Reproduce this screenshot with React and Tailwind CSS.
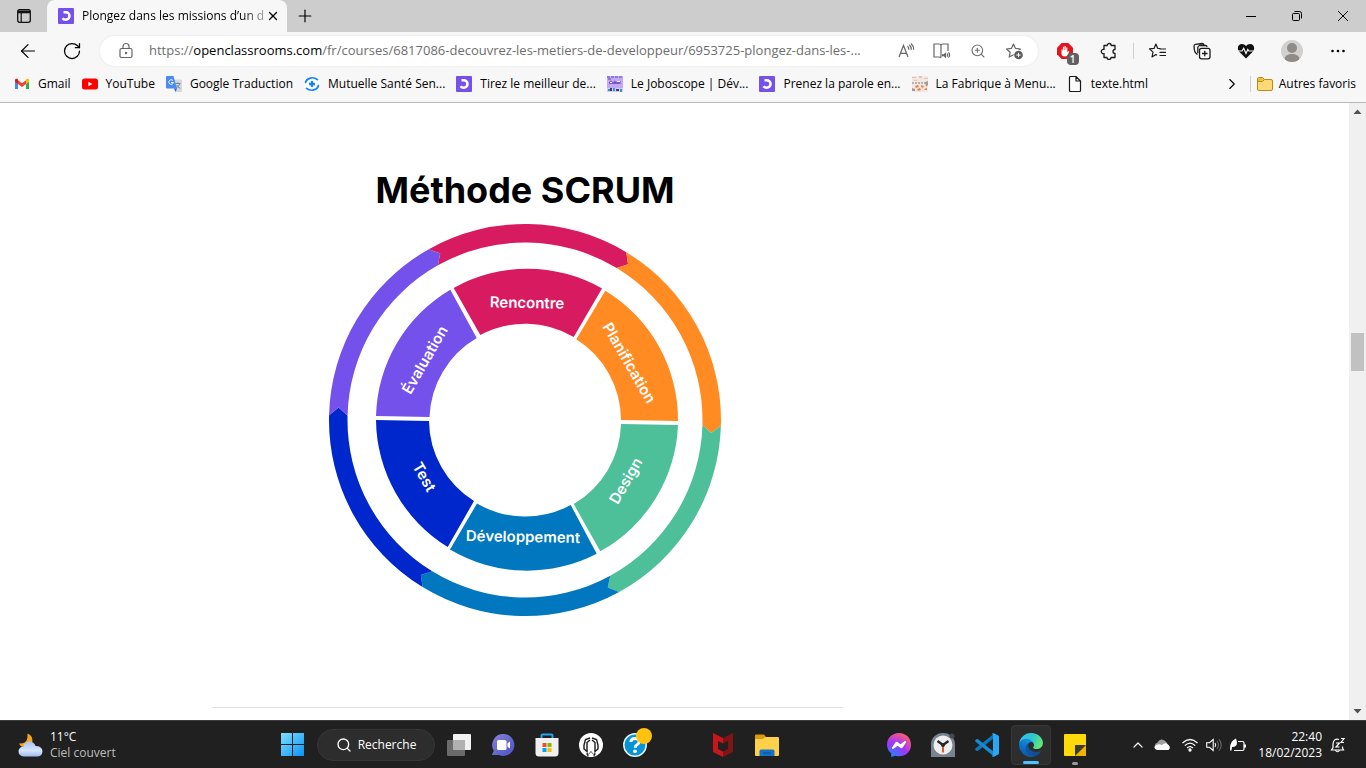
import React from "react";
import { ArrowLeft, ChevronRight, ChevronUp, Plus, RotateCw, Search, X, ZoomIn } from "lucide-react";

function OcLogo() {
  return (
    <svg viewBox="0 0 16 16" className="h-4 w-4 shrink-0" aria-hidden="true">
      <rect width="16" height="16" rx="1" fill="#7451eb" />
      <path d="M5.500 4.300h2.300a3.700 3.700 0 0 1 0 7.400q-2.200 0-3.300-1.500" fill="none" stroke="#fff" strokeWidth="2.500" />
    </svg>
  );
}

function GmailIcon() {
  return (
    <svg viewBox="0 0 16 16" className="h-4 w-4 shrink-0" aria-hidden="true">
      <path d="M1 4.500v8.500h3V7.500z" fill="#4285f4" />
      <path d="M12 7.500V13h3V4.500z" fill="#34a853" />
      <path d="M4 4.200v3.800l4 3 4-3V4.200L8 7.200z" fill="#ea4335" />
      <path d="M1 4.200C1 2.600 2.700 2.400 3.500 3.100L4 3.600V8L1 5.800z" fill="#c5221f" />
      <path d="M15 4.200c0-1.600-1.700-1.800-2.500-1.100l-.5.5V8l3-2.200z" fill="#fbbc04" />
    </svg>
  );
}

function YoutubeIcon() {
  return (
    <svg viewBox="0 0 16 16" className="h-4 w-4 shrink-0" aria-hidden="true">
      <rect y="2.500" width="16" height="11" rx="2.500" fill="#f00" />
      <path d="M6.400 5.700v4.600L10.400 8z" fill="#fff" />
    </svg>
  );
}

function TranslateIcon() {
  return (
    <svg viewBox="0 0 16 16" className="h-4 w-4 shrink-0" aria-hidden="true">
      <path d="M6 3.500h9a1 1 0 0 1 1 1V15a1 1 0 0 1-1 1H9.500z" fill="#d5d7da" />
      <path d="M9.500 7.500h5M12 6.300v1.200M13.700 7.500c-.5 2-1.700 3.500-3.500 4.500M10.700 9c.7 1.500 1.800 2.500 3.500 3.200" stroke="#7b8794" fill="none" />
      <path d="M1 0h6.500L11 12.500H1a1 1 0 0 1-1-1V1a1 1 0 0 1 1-1z" fill="#4a8af4" />
      <path d="M8 12.500h3L9.500 16z" fill="#3367d6" />
      <path d="M7 4.700a2.300 2.300 0 1 0 .4 1.800H5" stroke="#fff" fill="none" />
    </svg>
  );
}

function MutuelleIcon() {
  return (
    <svg viewBox="0 0 16 16" className="h-4 w-4 shrink-0" aria-hidden="true">
      <circle cx="8" cy="8" r="8" fill="#fff" />
      <path d="M1.500 6.500C2.500 2.200 9 0 13.500 3.600M14.500 9.500c-1 4.300-7.500 6.500-12 2.900" stroke="#1485f5" strokeWidth="1.700" fill="none" strokeLinecap="round" />
      <path d="M8 5v6M5 8h6" stroke="#1485f5" strokeWidth="2.300" />
    </svg>
  );
}

function JoboscopeIcon() {
  return (
    <svg viewBox="0 0 16 16" className="h-4 w-4 shrink-0" aria-hidden="true">
      <rect width="16" height="16" fill="#c4a7f5" />
      <path d="M0 1h16M1 3h4" stroke="#614fb0" strokeDasharray="3 1" />
      <path d="M2 6l2-1.500 2 2 1.500-2 2 1.500 4-1v3H2z" fill="#7657ce" />
      <path d="M3 6h2v1H3zM10 5h3v1h-3z" fill="#e5fff7" />
      <path d="M0 12h16v4H0z" fill="#d7c8f5" />
      <path d="M1 13h2v2H1zM6 12h2v3H6zM13 13h2v3h-2z" fill="#29a6a3" />
      <path d="M3 12h2v3H3zM9 13h3v2H9z" fill="#41348a" />
    </svg>
  );
}

function FabriqueIcon() {
  return (
    <svg viewBox="0 0 16 16" className="h-4 w-4 shrink-0" aria-hidden="true">
      <rect width="16" height="16" fill="#f1e8e3" />
      <path d="M0 1h4v1H0zM7 0h3v2H7zM12 2h4v1h-4zM2 4h3v1H2z" fill="#e6c3b2" />
      <path d="M0 7h14" stroke="#8a7d78" strokeDasharray="2 1" />
      <path d="M3 10l3-1 1 2-3 1zM9 9l3 1-1 2-2-1zM5 13l3-1 1 2-3 1zM12 13l3-1v2h-2z" fill="#e6854c" />
      <path d="M13 6l3-1v4l-2 2zM0 12l3 1v2H0z" fill="#a79b96" />
    </svg>
  );
}

function FileIcon() {
  return (
    <svg viewBox="0 0 16 16" className="h-4 w-4 shrink-0" aria-hidden="true">
      <path d="M3.500.500h5.500l4.500 4.500v9.500a1 1 0 0 1-1 1h-9a1 1 0 0 1-1-1v-13a1 1 0 0 1 1-1zM9 .500V5h4.500" fill="#fff" stroke="#1a1a1a" strokeWidth="1.200" />
    </svg>
  );
}

function FolderIcon() {
  return (
    <svg viewBox="0 0 16 16" className="h-4 w-4 shrink-0" aria-hidden="true">
      <path d="M.500 3a1.500 1.500 0 0 1 1.500-1.500h3.500l2 2H14A1.500 1.500 0 0 1 15.500 5v8a1.500 1.500 0 0 1-1.500 1.500H2A1.500 1.500 0 0 1 .500 13z" fill="#ffd977" stroke="#b98a14" />
      <path d="M1 2.800q0-.8 1-.8h3.300l1.700 1.500L5.300 5H1z" fill="#eebb3e" />
      <path d="M.500 5.500h5l2-2" stroke="#b98a14" fill="none" />
    </svg>
  );
}

const bookmarks = [
  { label: "Gmail", Icon: GmailIcon },
  { label: "YouTube", Icon: YoutubeIcon },
  { label: "Google Traduction", Icon: TranslateIcon },
  { label: "Mutuelle Santé Sen...", Icon: MutuelleIcon },
  { label: "Tirez le meilleur de...", Icon: OcLogo },
  { label: "Le Joboscope | Dév...", Icon: JoboscopeIcon },
  { label: "Prenez la parole en...", Icon: OcLogo },
  { label: "La Fabrique à Menu...", Icon: FabriqueIcon },
  { label: "texte.html", Icon: FileIcon },
];

function IconButton({ label, className = "w-11", children }) {
  return (
    <button type="button" aria-label={label} className={`flex h-8 shrink-0 items-center justify-center ${className}`}>
      {children}
    </button>
  );
}

function TabStrip() {
  return (
    <div className="flex h-8 shrink-0 bg-[#cdcdcd]">
      <IconButton label="Menu des actions d’onglet" className="w-[47px]">
        <svg viewBox="0 0 16 16" className="h-4 w-4" aria-hidden="true">
          <rect x="1.700" y="1.700" width="12.600" height="12.600" rx="2" fill="none" stroke="#111" strokeWidth="1.300" />
          <path d="M2 2.500h12v2.800H2z" fill="#111" />
          <path d="M5.200 5v9" stroke="#111" strokeWidth="1.200" />
        </svg>
      </IconButton>
      <div className="flex w-60 items-center justify-between rounded-t-lg bg-[#f7f7f7] pl-[11px] pr-1.5 text-black">
        <span className="flex items-center gap-2">
          <OcLogo />
          <span className="whitespace-nowrap text-xs [mask-image:linear-gradient(to_right,black_88%,#0005)]">
            Plongez dans les missions d’un d
          </span>
        </span>
        <IconButton label="Fermer l’onglet" className="w-4">
          <X className="h-3.5 w-3.5" strokeWidth={2.400} />
        </IconButton>
      </div>
      <IconButton label="Nouvel onglet" className="w-9">
        <Plus className="h-5 w-5" strokeWidth={1.400} />
      </IconButton>
      <div className="ml-auto flex">
        <IconButton label="Réduire" className="w-[46px]">
          <svg viewBox="0 0 12 12" className="h-3 w-3" aria-hidden="true"><path d="M1 6.500h10" stroke="#000" /></svg>
        </IconButton>
        <IconButton label="Restaurer" className="w-[46px]">
          <svg viewBox="0 0 12 12" className="h-3 w-3" fill="none" stroke="#000" aria-hidden="true">
            <rect x="1.500" y="3.500" width="7" height="7" rx="1" />
            <path d="M3.500 1.500h5a2 2 0 0 1 2 2v5" />
          </svg>
        </IconButton>
        <IconButton label="Fermer" className="w-[46px]">
          <svg viewBox="0 0 12 12" className="h-3 w-3" aria-hidden="true"><path d="M1 1l10 10M11 1L1 11" stroke="#000" /></svg>
        </IconButton>
      </div>
    </div>
  );
}

function AddressBar() {
  return (
    <div className="flex h-[30px] min-w-0 flex-1 items-center rounded-full bg-white pl-[18px] pr-1.5 text-[#6e6e6e] shadow-[0_0_3px_rgba(0,0,0,0.08)]">
      <svg viewBox="0 0 16 18" className="h-[18px] w-4 shrink-0" fill="none" stroke="#666" strokeWidth="1.200" aria-hidden="true">
        <rect x="2" y="6.500" width="12" height="9" rx="1.500" />
        <path d="M5 6.500V4.500a3 3 0 0 1 6 0v2" />
        <circle cx="8" cy="11" r=".6" fill="#666" />
      </svg>
      <div className="ml-[15px] min-w-0 flex-1 overflow-hidden whitespace-nowrap text-[13px]">
        https://<span className="text-black">openclassrooms.com</span>/fr/courses/6817086-decouvrez-les-metiers-de-developpeur/6953725-plongez-dans-les-...
      </div>
      <IconButton label="Lecture à voix haute" className="w-9">
        <svg viewBox="0 0 18 18" className="h-[18px] w-[18px]" fill="none" stroke="#666" strokeWidth="1.200" aria-hidden="true">
          <path d="M2 15L6.500 3.500 11 15M3.500 11.300h6" />
          <path d="M10.500 4.300q1.400 1.300 1.400 3.400M12.300 2.800q2 1.800 2 4.900M14.100 1.500q2.600 2.500 2.600 6.200" />
        </svg>
      </IconButton>
      <IconButton label="Lecteur immersif" className="w-9">
        <svg viewBox="0 0 18 18" className="h-[18px] w-[18px]" fill="none" stroke="#666" strokeWidth="1.200" aria-hidden="true">
          <path d="M8 3v12M8 3.500q0-1.500-2-1.500H1v13h5q2 0 2 1M8 3.500q0-1.500 2-1.500h5v7" />
          <path d="M9 12.300h1.700l2.300-2v6l-2.300-2H9z" fill="#666" stroke="none" />
          <path d="M14 11.500q1.300 1.500 0 3M15.500 10.300q2.300 2.700 0 5.400" />
        </svg>
      </IconButton>
      <IconButton label="Zoom" className="w-9"><ZoomIn className="h-4 w-4" strokeWidth={1.600} /></IconButton>
      <IconButton label="Ajouter aux favoris" className="w-9">
        <svg viewBox="0 0 18 18" className="h-[18px] w-[18px]" aria-hidden="true">
          <path d="M8.500 2l2 4.400 4.900.6-3.600 3.300.9 4.800-4.200-2.400-4.300 2.400.9-4.800L1.500 7l4.900-.6z" fill="none" stroke="#666" strokeWidth="1.200" strokeLinejoin="round" />
          <circle cx="13.500" cy="13" r="5" fill="#fff" />
          <circle cx="13.500" cy="13" r="4.300" fill="#5c5c5c" />
          <path d="M13.500 10.800v4.400M11.300 13h4.400" stroke="#fff" />
        </svg>
      </IconButton>
    </div>
  );
}

function Toolbar() {
  return (
    <div className="flex h-[38px] shrink-0 items-center px-1.5">
      <IconButton label="Retour"><ArrowLeft className="h-[22px] w-[22px]" strokeWidth={1.300} /></IconButton>
      <IconButton label="Actualiser" className="mr-1.5 w-11"><RotateCw className="h-5 w-5" strokeWidth={1.500} /></IconButton>
      <AddressBar />
      <IconButton label="Bloqueur de publicités" className="ml-1 w-[45px]">
        <span className="relative">
          <svg viewBox="0 0 16 16" className="h-4 w-4" aria-hidden="true">
            <path d="M4.700 0h6.600L16 4.700v6.600L11.300 16H4.700L0 11.300V4.700z" fill="#e3141b" />
            <path d="M4.500 6.500v4q0 3 3.500 3 2.500 0 3.300-2.500l1-3-1.200.2-.8 1V4.500H9.200V7h-.4V3H7.500v4h-.4V3.700H5.900V8h-.3V6.500z" fill="#fff" />
          </svg>
          <span className="absolute -bottom-1.5 left-2.5 h-3 w-3 rounded-sm bg-[#616161] text-center text-[10px] font-semibold leading-3 text-white">1</span>
        </span>
      </IconButton>
      <IconButton label="Extensions">
        <svg viewBox="0 0 18 18" className="h-[18px] w-[18px]" fill="none" stroke="#1a1a1a" strokeWidth="1.300" strokeLinejoin="round" aria-hidden="true">
          <path d="M4 3.500h3.200a2 2 0 0 1 4 0H15v4a1.900 1.900 0 1 0 0 4v4h-4a2 2 0 0 1-4 0H4v-4a2.100 2.100 0 1 1 0-4z" />
        </svg>
      </IconButton>
      <span className="mx-0.5 h-4 w-px bg-[#cfcfcf]" />
      <IconButton label="Favoris">
        <svg viewBox="0 0 18 18" className="h-[18px] w-[18px]" fill="none" stroke="#1a1a1a" strokeWidth="1.200" strokeLinejoin="round" aria-hidden="true">
          <path d="M11.500 6.500l-2.700-.1L6.900 2 5.100 6.400l-4.600.5 3.500 3.200L3 15l3.900-2.500L8 13.200M10.500 7h6.500M10.500 10.300h6.500M10.500 13.500h6.500" />
        </svg>
      </IconButton>
      <IconButton label="Collections">
        <svg viewBox="0 0 18 18" className="h-[18px] w-[18px]" fill="none" stroke="#1a1a1a" strokeWidth="1.300" aria-hidden="true">
          <path d="M4.500 12.500L2.800 11Q1.500 9.500 1.300 7.500L1 4Q1 2.500 2.500 2.300L9 1.500q1.500 0 2 1.300M4.800 11V5.500Q5 4 6.500 3.500h6q1.300 0 1.700 1.300" />
          <rect x="6.500" y="6.300" width="10.500" height="10.500" rx="2" />
          <path d="M11.750 8.800v5.500M9 11.500h5.500" />
        </svg>
      </IconButton>
      <IconButton label="Performances">
        <svg viewBox="0 0 18 16" className="h-4 w-[18px]" aria-hidden="true">
          <path d="M9 15.500L2.200 8.800C-.5 5.500 1 1 5 1q2.500 0 4 2 1.500-2 4-2c4 0 5.500 4.500 2.800 7.800z" fill="#111" />
          <path d="M0 8h5l1.700-2.800L9 10.500l1.800-4L12 8h6" fill="none" stroke="#f7f7f7" strokeWidth="1.200" />
        </svg>
      </IconButton>
      <IconButton label="Profil" className="w-12">
        <svg viewBox="0 0 22 22" className="h-[22px] w-[22px]" aria-hidden="true">
          <defs><clipPath id="avatar-clip"><circle cx="11" cy="11" r="11" /></clipPath></defs>
          <circle cx="11" cy="11" r="11" fill="#d2d0ce" />
          <g fill="#8f8b88" clipPath="url(#avatar-clip)"><circle cx="11" cy="8" r="5" /><ellipse cx="11" cy="19" rx="7.500" ry="5" /></g>
        </svg>
      </IconButton>
      <IconButton label="Paramètres et plus">
        <svg viewBox="0 0 16 16" className="h-4 w-4" aria-hidden="true"><circle cx="2.500" cy="8" r="1.300" /><circle cx="8" cy="8" r="1.300" /><circle cx="13.500" cy="8" r="1.300" /></svg>
      </IconButton>
    </div>
  );
}

function BookmarksBar() {
  return (
    <nav aria-label="Favoris" className="flex h-[33px] shrink-0 items-center gap-[11px] border-b border-[#b9b9b9] pb-1 pl-3.5 pr-2.5 text-xs text-black">
      {bookmarks.map(({ label, Icon }) => (
        <a key={label} href="#" className="flex shrink-0 items-center gap-2 whitespace-nowrap">
          <Icon />
          {label}
        </a>
      ))}
      <div className="ml-auto flex items-center">
        <IconButton label="Plus de favoris" className="w-6"><ChevronRight className="h-[18px] w-[18px]" strokeWidth={1.500} /></IconButton>
        <span className="mx-1.5 h-4 w-px bg-[#cfcfcf]" />
        <button type="button" className="flex items-center gap-1.5 whitespace-nowrap"><FolderIcon />Autres favoris</button>
      </div>
    </nav>
  );
}

const RING = { cx: 525, cy: 420, outer: 196, inner: 177.5 };
const ringSegments = [
  { color: "#d81b60", from: -29.4, to: 31.1 },
  { color: "#ff8b22", from: 31.1, to: 91.6 },
  { color: "#4dbf99", from: 91.6, to: 151.3 },
  { color: "#0077be", from: 151.3, to: 211.5 },
  { color: "#0027cc", from: 211.5, to: 271.4 },
  { color: "#7451eb", from: 271.4, to: 330.6 },
];
const wedges = [
  { color: "#d81b60", d: "M453.700 288A151 151 0 0 1 602 288.500L573.700 337A95.500 95.500 0 0 0 480.300 335Z" },
  { color: "#ff8b22", d: "M605.300 290.700A151 151 0 0 1 678 421L621 420A95.500 95.500 0 0 0 576.300 339.300Z" },
  { color: "#4dbf99", d: "M678 425A151 151 0 0 1 600.300 551.300L573.700 504A95.500 95.500 0 0 0 621 424Z" },
  { color: "#0077be", d: "M596.700 553.700A151 151 0 0 1 450 549.500L477 503.500A95.500 95.500 0 0 0 570.700 505Z" },
  { color: "#0027cc", d: "M447.700 547A151 151 0 0 1 376 420L429 421A95.500 95.500 0 0 0 474 501Z" },
  { color: "#7451eb", d: "M376 416A151 151 0 0 1 450.300 289.700L476.700 338A95.500 95.500 0 0 0 429.500 417Z" },
];
const wedgeLabels = [
  { text: "Rencontre", x: 527, y: 303, turn: 1 },
  { text: "Planification", x: 629, y: 363, turn: 60 },
  { text: "Design", x: 626, y: 481, turn: -60 },
  { text: "Développement", x: 523, y: 537, turn: 1 },
  { text: "Test", x: 424, y: 477, turn: 60 },
  { text: "Évaluation", x: 425, y: 360, turn: -60 },
];

function ringPoint(radius, degrees) {
  const a = (degrees * Math.PI) / 180;
  return `${(RING.cx + radius * Math.sin(a)).toFixed(2)} ${(RING.cy - radius * Math.cos(a)).toFixed(2)}`;
}

function arrowPath(from, to) {
  const { outer, inner } = RING;
  const middle = (outer + inner) / 2;
  return `M${ringPoint(outer, from)}A${outer} ${outer} 0 0 1 ${ringPoint(outer, to)}L${ringPoint(middle, to + 2.4)}L${ringPoint(inner, to)}A${inner} ${inner} 0 0 0 ${ringPoint(inner, from)}L${ringPoint(middle, from + 2.4)}Z`;
}

function ScrumDiagram() {
  return (
    <svg viewBox="328 223 394 394" className="h-[394px] w-[394px]" role="img" aria-label="Cycle de la méthode SCRUM">
      {ringSegments.map((s) => <path key={s.color} d={arrowPath(s.from, s.to)} fill={s.color} />)}
      {wedges.map((w) => <path key={w.color} d={w.d} fill={w.color} />)}
      <g fill="#fff" fontSize="15" fontWeight="600" textAnchor="middle" className="font-[Inter,sans-serif]">
        {wedgeLabels.map((l) => (
          <text key={l.text} transform={`translate(${l.x} ${l.y}) rotate(${l.turn})`} dy="5">{l.text}</text>
        ))}
      </g>
    </svg>
  );
}

function Scrollbar() {
  return (
    <div className="flex w-[17px] shrink-0 flex-col items-center bg-[#f0f0f0]" aria-hidden="true">
      <svg viewBox="0 0 17 17" className="h-[17px] w-[17px]"><path d="M4.500 11h8l-4-4.500z" fill="#505050" /></svg>
      <div className="flex-[213]" />
      <div className="h-[38px] w-[13px] bg-[#c1c1c1]" />
      <div className="flex-[332]" />
      <svg viewBox="0 0 17 17" className="h-[17px] w-[17px]"><path d="M4.500 6h8l-4 4.500z" fill="#505050" /></svg>
    </div>
  );
}

function WindowsIcon() {
  return (
    <svg viewBox="0 0 24 24" className="h-6 w-6" aria-hidden="true">
      <defs><linearGradient id="win" x1="0" y1="0" x2="1" y2="1"><stop stopColor="#7fe0ff" /><stop offset="1" stopColor="#0a93f5" /></linearGradient></defs>
      <path d="M0 0h11v11H0zM12 0h11v11H12zM0 12h11v11H0zM12 12h11v11H12z" fill="url(#win)" />
    </svg>
  );
}

function TaskViewIcon() {
  return (
    <svg viewBox="0 0 24 24" className="h-6 w-6" aria-hidden="true">
      <rect x="6" y="1" width="18" height="16" rx="1" fill="#f1f1f1" />
      <rect x="0" y="7" width="18" height="16" rx="1" fill="#6b6b6b" />
      <path d="M6 7h12v10H6z" fill="#b0b0b0" />
    </svg>
  );
}

function ChatIcon() {
  return (
    <svg viewBox="0 0 24 24" className="h-6 w-6" aria-hidden="true">
      <defs><linearGradient id="chat" x1="0" y1="0" x2="1" y2="1"><stop stopColor="#9a7fe0" /><stop offset=".4" stopColor="#6a70cc" /><stop offset="1" stopColor="#5050c8" /></linearGradient></defs>
      <path d="M12.500 1a11 11 0 1 1-4.700 21H1.500q-1-.4 0-1.500l1.300-2.800A11 11 0 0 1 12.500 1z" fill="url(#chat)" />
      <rect x="6" y="7" width="9.500" height="10" rx="1.500" fill="#fff" />
      <path d="M16.500 10.300L19 8.500v7l-2.500-1.800z" fill="#fff" />
    </svg>
  );
}

function StoreIcon() {
  return (
    <svg viewBox="0 0 24 24" className="h-6 w-6" aria-hidden="true">
      <path d="M6.500 7V2.500a1 1 0 0 1 1-1h9a1 1 0 0 1 1 1V7" fill="none" stroke="#22a7ee" strokeWidth="2" />
      <path d="M.500 5h23V20a3.500 3.500 0 0 1-3.500 3.500H4A3.500 3.500 0 0 1 .500 20z" fill="#f0f0f0" />
      <path d="M7.500 10h4v4h-4z" fill="#f25022" /><path d="M12.500 10h4v4h-4z" fill="#7fba00" />
      <path d="M7.500 15h4v4h-4z" fill="#00a4ef" /><path d="M12.500 15h4v4h-4z" fill="#ffb900" />
    </svg>
  );
}

function ArchIcon() {
  return (
    <svg viewBox="0 0 24 24" className="h-6 w-6" aria-hidden="true">
      <circle cx="12" cy="12" r="12" fill="#fff" />
      <path d="M11 5L6.500 6.500 5 12v4l3 2.500V9.500L11 7M13 5l4.500 1.500L19 12v4l-3 2.500V9.500L13 7" fill="none" stroke="#1d1d1d" strokeWidth="1.400" />
      <path d="M7.500 21.500v-2L9.500 21l2.500-3 2.500 3 2-1.500v2l-1.500 2H9z" fill="#1d1d1d" />
      <path d="M9.500 24v-2.500L12 19l2.500 2.500V24z" fill="#fff" />
    </svg>
  );
}

function HelpIcon() {
  return (
    <svg viewBox="0 0 24 24" className="h-6 w-6 overflow-visible" aria-hidden="true">
      <circle cx="12" cy="12" r="11.200" fill="#0793d6" stroke="#e8f6fd" strokeWidth="1.500" />
      <path d="M7.800 9q.3-3.500 4.300-3.500 4.100 0 4.100 3.200 0 1.800-2.200 3-1.800 1-1.800 3.100" fill="none" stroke="#fff" strokeWidth="2.900" />
      <circle cx="12" cy="18.300" r="1.900" fill="#fff" />
      <circle cx="21" cy="3" r="8" fill="#ffc20e" />
    </svg>
  );
}

function McAfeeIcon() {
  return (
    <svg viewBox="0 0 24 24" className="h-6 w-6" aria-hidden="true">
      <path d="M2 0l10 5v5.500L7 8v8l5 2.500V24L2 19z" fill="#c8161d" />
      <path d="M22 0L12 5v5.500L17 8v8l-5 2.500V24l10-5z" fill="#811417" />
    </svg>
  );
}

function ExplorerIcon() {
  return (
    <svg viewBox="0 0 24 24" className="h-6 w-6" aria-hidden="true">
      <path d="M0 2.500q0-1 1-1h8l2 2.500v4H0z" fill="#dc9a12" />
      <path d="M0 6h8l2.500-2H23q1 0 1 1v17q0 1-1 1H1q-1 0-1-1z" fill="#ffd04a" />
      <path d="M4.500 23v-5q0-1.500 1.500-1.500h12q1.500 0 1.500 1.500v5z" fill="#1273c9" />
      <path d="M8 20h8" stroke="#0c57a0" strokeWidth="1.500" />
    </svg>
  );
}

function MessengerIcon() {
  return (
    <svg viewBox="0 0 24 24" className="h-6 w-6" aria-hidden="true">
      <defs><radialGradient id="msg" cx=".2" cy="1" r="1.100"><stop stopColor="#1a8cff" /><stop offset=".55" stopColor="#a033ff" /><stop offset="1" stopColor="#ff6070" /></radialGradient></defs>
      <path d="M12 0c6.800 0 12 5 12 11.700S18.800 23.300 12 23.300q-1.800 0-3.400-.5L4.200 24v-3.700A11.300 11.300 0 0 1 0 11.700C0 5 5.200 0 12 0z" fill="url(#msg)" />
      <path d="M4.800 15.100l3.500-5.600q.9-1.300 2.200-.4l2.800 2.100 4.600-3.100q.9-.3 1.300.8l-3.500 5.600q-.9 1.300-2.200.4l-2.800-2.100-4.600 3.100q-1 .2-1.300-.8z" fill="#fff" />
    </svg>
  );
}

function ClockIcon() {
  return (
    <svg viewBox="0 0 24 24" className="h-6 w-6" aria-hidden="true">
      <path d="M0 24V11.500A11.500 11.500 0 0 1 11.500 0h1A11.500 11.500 0 0 1 24 11.500V24z" fill="#78838d" />
      <circle cx="21" cy="3" r="2.500" fill="#44494e" />
      <circle cx="12" cy="12" r="9.500" fill="#eee" />
      <path d="M6.500 8L12 12l5.500-4" fill="none" stroke="#252525" strokeWidth="2.300" />
      <path d="M12 13v6.500" stroke="#d94a1c" strokeWidth="1.800" />
      <circle cx="12" cy="12" r="2" fill="#252525" />
    </svg>
  );
}

function CodeIcon() {
  return (
    <svg viewBox="0 0 24 24" className="h-6 w-6" aria-hidden="true">
      <path d="M2 16.300L19.500 2.500" stroke="#0a78bd" strokeWidth="3.400" strokeLinecap="round" />
      <path d="M2 7.700l17.500 14" stroke="#168bd2" strokeWidth="3.400" strokeLinecap="round" />
      <path d="M17 .600q.7-.7 1.700-.3l4.500 2.200q.8.400.8 1.300v16.400q0 .9-.8 1.300l-4.500 2.200q-1 .4-1.700-.3l1-1.700V2.500z" fill="#28a8f2" />
    </svg>
  );
}

function EdgeIcon() {
  return (
    <svg viewBox="4 4 257 257" className="h-6 w-6" aria-hidden="true">
      <defs>
        <linearGradient id="edge-a" x1="0" y1=".5" x2="1" y2=".5"><stop stopColor="#0c59a4" /><stop offset="1" stopColor="#114a8b" /></linearGradient>
        <linearGradient id="edge-b" x1=".8" y1="0" x2=".3" y2="1"><stop stopColor="#1b9de2" /><stop offset=".5" stopColor="#0e78cf" /><stop offset="1" stopColor="#0d54a2" /></linearGradient>
        <linearGradient id="edge-c" x1="0" y1=".3" x2="1" y2=".6"><stop stopColor="#35c1f1" /><stop offset=".5" stopColor="#2cc7cd" /><stop offset="1" stopColor="#66eb6e" /></linearGradient>
      </defs>
      <path d="M235.680 195.460a93.730 93.730 0 0 1-10.540 4.710 101.870 101.870 0 0 1-35.900 6.460c-47.320 0-88.540-32.550-88.540-74.320A31.480 31.480 0 0 1 117.130 105c-42.800 1.800-53.800 46.400-53.800 72.530 0 73.880 68.090 81.370 82.760 81.370 7.910 0 19.840-2.300 27-4.560l1.310-.44a128.340 128.340 0 0 0 66.600-52.800 4 4 0 0 0-5.320-5.640z" fill="url(#edge-a)" />
      <path d="M110.340 246.340A79.200 79.200 0 0 1 87.600 225 80.720 80.720 0 0 1 117.120 105c3.120-1.470 8.450-4.130 15.540-4a32.350 32.350 0 0 1 25.690 13 31.880 31.880 0 0 1 6.360 18.660c0-.21 24.460-79.600-80-79.600-43.900 0-80 41.660-80 78.210a130.150 130.150 0 0 0 12.110 56 128 128 0 0 0 156.380 67.110 75.550 75.550 0 0 1-62.780-8z" fill="url(#edge-b)" />
      <path d="M156.940 153.780c-.81 1.050-3.300 2.500-3.300 5.660 0 2.610 1.700 5.120 4.720 7.230 14.380 10 41.490 8.680 41.560 8.680a59.560 59.560 0 0 0 30.270-8.350A61.380 61.380 0 0 0 260.600 114.100c.26-22.410-8-37.310-11.340-43.910C228.080 28.760 182.350 5 132.600 5a128 128 0 0 0-128 126.200c.48-36.540 36.800-66.050 80-66.050 3.500 0 23.460.34 42 10.070 16.340 8.580 24.900 18.940 30.850 29.210 6.180 10.670 7.280 24.150 7.280 29.520s-2.740 13.330-7.800 19.910z" fill="url(#edge-c)" />
    </svg>
  );
}

function NotesIcon() {
  return (
    <svg viewBox="0 0 24 24" className="h-6 w-6" aria-hidden="true">
      <rect x="1" y="1" width="22" height="22" rx=".8" fill="#ffd90a" />
      <path d="M12 12h11v11H12z" fill="#f0b400" />
      <path d="M12 12h11L12 23z" fill="#3b3a39" />
    </svg>
  );
}

const pinned = [
  { label: "Vue des tâches", Icon: TaskViewIcon },
  { label: "Conversation", Icon: ChatIcon },
  { label: "Microsoft Store", Icon: StoreIcon },
  { label: "Assistant", Icon: ArchIcon },
  { label: "Aide", Icon: HelpIcon },
  null,
  { label: "McAfee", Icon: McAfeeIcon },
  { label: "Explorateur de fichiers", Icon: ExplorerIcon },
  null,
  null,
  { label: "Messenger", Icon: MessengerIcon },
  { label: "Horloge", Icon: ClockIcon },
  { label: "Visual Studio Code", Icon: CodeIcon },
  { label: "Microsoft Edge", Icon: EdgeIcon, state: "active" },
  { label: "Pense-bête", Icon: NotesIcon, state: "open" },
];

function TaskbarApp({ app }) {
  if (!app) return <span className="w-11" />;
  const { label, Icon, state } = app;
  return (
    <div className="flex w-11 justify-center">
      <button
        type="button"
        aria-label={label}
        className={`relative flex h-10 w-10 items-center justify-center rounded ${state === "active" ? "border border-[#383838] bg-[#2d2d2d]" : ""}`}
      >
        <Icon />
        {state === "active" && <span className="absolute bottom-0 h-[3px] w-4 rounded-full bg-[#4cc2ff]" />}
        {state === "open" && <span className="absolute bottom-0 h-[3px] w-1.5 rounded-full bg-[#9a9a9a]" />}
      </button>
    </div>
  );
}

function Taskbar() {
  return (
    <footer className="flex h-12 shrink-0 items-center border-t border-[#3d3d3d] bg-[#202020] text-xs text-white">
      <button type="button" className="flex min-w-0 flex-1 items-center gap-[7px] pl-[18px] text-left leading-4">
        <svg viewBox="0 0 25 24" className="h-6 w-[25px] shrink-0" aria-hidden="true">
          <defs><linearGradient id="cloud" x1="0" y1="0" x2="0" y2="1"><stop stopColor="#a8c4f2" /><stop offset=".6" stopColor="#d7e5fb" /><stop offset="1" stopColor="#9dbcf0" /></linearGradient></defs>
          <path d="M9.500.500q5.300 2 5 7.500-1 6.500-8 6-4 0-5.500-3.500 6.500.5 8-4Q9.800 4 9.500.500z" fill="#f5a623" />
          <path d="M5.500 23.500a5 5 0 0 1 0-10q1-5 6-5 4.500 0 6 4.500 6.800 0 7 5.500-.5 5-5.500 5z" fill="url(#cloud)" />
        </svg>
        <span><span className="block">11°C</span><span className="block text-[#bdbdbd]">Ciel couvert</span></span>
      </button>
      <div className="ml-1 flex items-center">
        <button type="button" aria-label="Démarrer" className="flex h-10 w-11 items-center justify-center"><WindowsIcon /></button>
        <button type="button" className="mx-0.5 flex h-8 w-[118px] items-center justify-center gap-1.5 rounded-full border border-[#363636] bg-[#2d2d2d]">
          <Search className="h-4 w-4" strokeWidth={2} />Recherche
        </button>
        {pinned.map((app, i) => <TaskbarApp key={i} app={app} />)}
      </div>
      <div className="flex min-w-0 flex-1 items-center justify-end pr-5">
        <button type="button" aria-label="Icônes masquées" className="mr-2"><ChevronUp className="h-4 w-4" strokeWidth={1.800} /></button>
        <svg viewBox="0 0 16 11" className="mr-3 h-[11px] w-4" aria-hidden="true">
          <path d="M2 9.500Q-1 5 3.500 3.500 6-1 10.500 1.500 13 3 13.500 5L4 10z" fill="#9f9f9f" />
          <path d="M3 11q-3-.5-2.500-3.500Q4 4 8 6q3-3 6-.5 3.500 3 .5 5.500z" fill="#fff" />
        </svg>
        <svg viewBox="0 0 16 14" className="mr-2 h-3.5 w-4" fill="none" stroke="#fff" strokeWidth="1.300" aria-hidden="true">
          <path d="M.500 5q7.500-7 15 0M2.800 7.600q5.200-5 10.400 0M5.100 10q2.900-2.800 5.800 0" /><circle cx="8" cy="12" r="1" fill="#fff" />
        </svg>
        <svg viewBox="0 0 16 14" className="mr-2 h-3.5 w-4" fill="none" stroke="#fff" strokeWidth="1.100" aria-hidden="true">
          <path d="M.700 4.700h2.800L7.200 1.500v11L3.500 9.300H.700z" /><path d="M9 5q1.500 2 0 4" /><path d="M11 3q3 4 0 8M13 1.300q4.500 5.700 0 11.400" stroke="#666" />
        </svg>
        <svg viewBox="0 0 16 14" className="mr-3 h-3.5 w-4" aria-hidden="true">
          <path d="M8 3.500h4.500q1.500 0 1.500 1.500v6q0 1.500-1.500 1.500H4" stroke="#fff" fill="none" strokeWidth="1.200" /><path d="M14 6.500h2v3h-2z" fill="#fff" />
          <path d="M0 12.500Q-.5 3 6 .500q1.500 4 .5 6.500-1.500 2.500-4.500 2L1.500 12.500z" fill="#fff" />
        </svg>
        <time className="mr-2 whitespace-nowrap text-right leading-4"><span className="block">22:40</span><span className="block">18/02/2023</span></time>
        <button type="button" aria-label="Notifications">
          <svg viewBox="0 0 16 16" className="h-4 w-4" fill="none" stroke="#fff" strokeWidth="1.200" aria-hidden="true">
            <path d="M9 2.500Q3.500 1 3 7v3.500L1.500 13h12L12.500 11V9.500M5.500 13.500q2 2.500 4 0" /><path d="M6 6h3.500L6 10h3.500M11 1.500h3L11 5.500h3" />
          </svg>
        </button>
      </div>
    </footer>
  );
}

export default function App() {
  return (
    <div className="flex h-screen flex-col overflow-hidden bg-white font-['Open_Sans','Noto_Sans',sans-serif]">
      <header className="shrink-0 bg-[#f7f7f7]">
        <TabStrip />
        <Toolbar />
        <BookmarksBar />
      </header>
      <div className="flex min-h-0 flex-1">
        <main className="min-w-0 flex-1 overflow-hidden pl-[212px]">
          <figure className="flex max-w-[631px] flex-col items-center border-b border-[#e1e1e1] pb-[90px] pr-[5px] pt-[65px]">
            <figcaption className="whitespace-nowrap font-[Inter,sans-serif] text-4xl font-bold leading-[44px] text-black">Méthode SCRUM</figcaption>
            <div className="mt-[11px]"><ScrumDiagram /></div>
          </figure>
        </main>
        <Scrollbar />
      </div>
      <Taskbar />
    </div>
  );
}
